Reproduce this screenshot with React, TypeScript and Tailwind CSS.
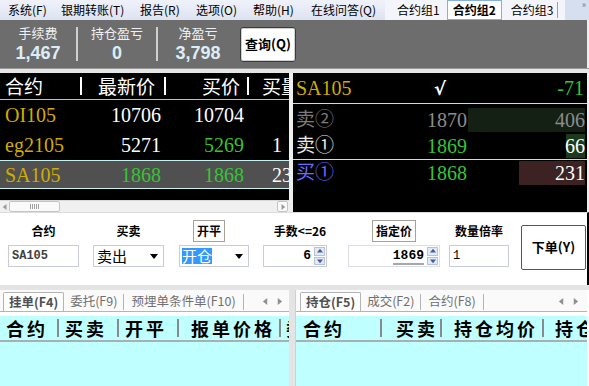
const quoteFont = "font-['Liberation_Serif','Noto_Sans_CJK_SC',serif]";
const monoFont = "font-['Liberation_Mono','Noto_Sans_CJK_SC',monospace]";

function Tri({ dir, color = "#000", size = 7 }: { dir: "up" | "down" | "left" | "right"; color?: string; size?: number }) {
  const pts: Record<string, string> = {
    up: "0,6 4,1 8,6",
    down: "0,2 8,2 4,7",
    left: "6,0 6,8 1,4",
    right: "2,0 2,8 7,4",
  };
  return (
    <svg width={size} height={size} viewBox="0 0 8 8">
      <polygon points={pts[dir]} fill={color} />
    </svg>
  );
}

function Spinner() {
  return (
    <div className="w-[12px] h-full flex flex-col gap-[1px] py-[1px] pr-[1px]">
      <div className="flex-1 flex items-center justify-center bg-[#e4eaf4] border border-[#b8c2d2]">
        <Tri dir="up" color="#3d5fa8" size={6} />
      </div>
      <div className="flex-1 flex items-center justify-center bg-[#e4eaf4] border border-[#b8c2d2]">
        <Tri dir="down" color="#3d5fa8" size={6} />
      </div>
    </div>
  );
}

function Sep({ h = "h-[18px]", c = "bg-white" }: { h?: string; c?: string }) {
  return <div className={`w-[2px] shrink-0 ${h} ${c}`} />;
}

export default function App() {
  const menus = [
    ["系统(F)", "w-[53px]"],
    ["银期转账(T)", "w-[79px]"],
    ["报告(R)", "w-[56px]"],
    ["选项(O)", "w-[57px]"],
    ["帮助(H)", "w-[58px]"],
    ["在线问答(Q)", "w-[74px]"],
  ];

  const stats = [
    ["手续费", "1,467", "w-[76px]"],
    ["持仓盈亏", "0", "w-[78px]"],
    ["净盈亏", "3,798", "w-[80px]"],
  ];

  return (
    <div className="w-[589px] h-[386px] overflow-hidden flex flex-col bg-[#e4e4e4] font-['Noto_Sans_CJK_SC',sans-serif]">
      {/* menu bar */}
      <div className="h-[20px] shrink-0 flex items-center bg-gradient-to-b from-[#f0f2fa] to-[#dde3f1] text-[12px] text-black pl-[8px]">
        {menus.map(([t, w]) => (
          <span key={t} className={`${w} shrink-0 whitespace-nowrap`}>{t}</span>
        ))}
        <div className="flex items-center h-full bg-[#f3f5fa] pl-[12px] w-[180px]">
          <span className="whitespace-nowrap">合约组1</span>
          <span className="ml-[7px] h-full px-[5px] flex items-center bg-white border border-[#86aee6] font-bold whitespace-nowrap">合约组2</span>
          <span className="ml-[9px] whitespace-nowrap">合约组3</span>
          <div className="ml-[4px] w-px h-[16px] bg-[#a0a0a0]" />
        </div>
        <div className="flex-1 h-full bg-[#d6dff0] flex justify-end items-start pr-[3px] text-[9px] leading-[10px] text-[#6070a0]">»</div>
      </div>

      {/* stats */}
      <div className="h-[48px] shrink-0 flex items-center bg-[#6d6d6d]">
        {stats.map(([label, value, w], i) => (
          <div key={label} className="flex items-center">
            {i > 0 && <div className="w-[2px] h-[34px] bg-[#d0d0d0]" />}
            <div className={`${w} flex flex-col items-center leading-none`}>
              <span className="text-[13px] text-[#f0f0f0]">{label}</span>
              <span className="mt-[5px] text-[18px] font-bold text-[#dcedf8] font-['Liberation_Sans',sans-serif]">{value}</span>
            </div>
          </div>
        ))}
        <button className="ml-[2px] w-[56px] h-[35px] bg-white border border-[#3a3a3a] rounded-[3px] shadow-[inset_0_0_0_1px_#d0d0d0] text-[13px] font-bold text-black">
          查询(Q)
        </button>
        <div className="flex-1 self-stretch border-r-2 border-[#f0f0f0]" />
      </div>

      <div className="h-[5px] shrink-0 bg-[#e6e6e6] border-t border-[#9a9a9a]" />

      {/* quote area */}
      <div className="h-[139px] shrink-0 flex">
        <div className={`w-[289px] flex flex-col bg-black overflow-hidden ${quoteFont}`}>
          <div className="h-[27px] flex items-center border-b border-[#c0c0c0] text-white text-[19px] font-['Noto_Sans_CJK_SC',sans-serif] whitespace-nowrap overflow-hidden">
            <div className="w-[80px] shrink-0 pl-[5px]">合约</div>
            <Sep />
            <div className="w-[82px] shrink-0 text-right pr-[9px]">最新价</div>
            <Sep />
            <div className="w-[81px] shrink-0 text-right pr-[7px]">买价</div>
            <Sep />
            <div className="flex-1 pl-[13px] overflow-hidden">买量</div>
          </div>
          {[
            ["OI105", "10706", "10704", "", "text-white", "text-white", ""],
            ["eg2105", "5271", "5269", "1", "text-white", "text-[#35c435]", ""],
            ["SA105", "1868", "1868", "23", "text-[#35c435]", "text-[#35c435]", "sel"],
          ].map(([c, last, bid, vol, lc, bc, sel]) => (
            <div
              key={c}
              className={`flex items-center text-[20px] whitespace-nowrap overflow-hidden ${sel ? "h-[29px] bg-[#505050] border-y border-[#c8f4f4]" : "h-[30px]"}`}
            >
              <div className="w-[82px] shrink-0 pl-[5px] text-[#d0ac00]">{c}</div>
              <div className={`w-[84px] shrink-0 text-right pr-[5px] ${lc}`}>{last}</div>
              <div className={`w-[83px] shrink-0 text-right pr-[5px] ${bc}`}>{bid}</div>
              <div className="flex-1 pl-[23px] overflow-hidden text-white">{vol}</div>
            </div>
          ))}
          <div className="flex-1" />
          <div className="h-[12px] flex items-center bg-[#f0f0f0] border-t border-[#d8d8d8]">
            <div className="w-[9px] h-full flex items-center justify-center">
              <Tri dir="left" color="#9a9a9a" size={6} />
            </div>
            <div className="w-[51px] h-[11px] bg-[#fafafa] border border-[#c4c4c4] rounded-[2px] flex items-center justify-center gap-[1px]">
              {[0, 1, 2, 3, 4].map((k) => (
                <div key={k} className="w-px h-[5px] bg-[#a0a0a0]" />
              ))}
            </div>
            <div className="flex-1" />
            <div className="w-[11px] h-[11px] mr-[1px] border border-[#c4c4c4] rounded-[2px] bg-[#fafafa] flex items-center justify-center">
              <Tri dir="right" color="#9a9a9a" size={6} />
            </div>
          </div>
        </div>
        <div className="w-[4px] bg-[#eeeeee]" />
        <div className={`w-[294px] bg-black flex flex-col text-[20px] whitespace-nowrap ${quoteFont}`}>
          <div className="h-[31px] shrink-0 flex items-center border-b border-[#d8d8d8] px-[3px]">
            <div className="flex-1 text-[#d0ac00]">SA105</div>
            <div className="text-white text-[18px] font-bold font-['DejaVu_Sans',sans-serif]">√</div>
            <div className="flex-1 text-right text-[#35c435]">-71</div>
          </div>
          <div className="h-[24px] mt-[4px] flex items-center">
            <div className="w-[100px] pl-[3px] text-[#7c7c7c] text-[19px]">卖②</div>
            <div className="w-[74px] text-right text-[#8c8c8c]">1870</div>
            <div className="flex-1 h-full flex justify-end pr-[2px]">
              <div className="w-[117px] h-full bg-[#132013] flex justify-end items-center text-[#8c8c8c]">406</div>
            </div>
          </div>
          <div className="h-[24px] mt-[2px] flex items-center">
            <div className="w-[100px] pl-[3px] text-[#e8e8e8] text-[19px]">卖①</div>
            <div className="w-[74px] text-right text-[#35c435]">1869</div>
            <div className="flex-1 h-full flex justify-end pr-[2px]">
              <div className="w-[19px] h-full bg-[#1c3a1c] flex justify-end items-center text-white">66</div>
            </div>
          </div>
          <div className="h-px mt-[1px] bg-[#d8d8d8]" />
          <div className="h-[24px] mt-[1px] flex items-center">
            <div className="w-[100px] pl-[3px] text-[#6a6aff] text-[19px]">买①</div>
            <div className="w-[74px] text-right text-[#35c435]">1868</div>
            <div className="flex-1 h-full flex justify-end pr-[2px]">
              <div className="w-[66px] h-full bg-[#3c2222] flex justify-end items-center text-white">231</div>
            </div>
          </div>
        </div>
        <div className="flex-1 bg-[#eeeeee]" />
      </div>

      {/* order entry */}
      <div className="h-[73px] shrink-0 flex bg-white pl-[8px] border-r-2 border-black border-t border-t-[#dcdcdc] text-[12px] font-bold text-black">
        <div className="w-[71px] flex flex-col items-center pt-[7px]">
          <div className="h-[22px] flex items-center">合约</div>
          <div className={`mt-[3px] w-full h-[22px] border border-[#c8ccd6] flex items-center pl-[3px] text-[12px] text-[#404040] ${monoFont}`}>SA105</div>
        </div>
        <div className="ml-[14px] w-[71px] flex flex-col items-center pt-[7px]">
          <div className="h-[22px] flex items-center">买卖</div>
          <div className="mt-[3px] w-full h-[22px] border border-[#c8ccd6] flex items-center pl-[3px] pr-[5px] font-normal text-[15px]">
            <span className="flex-1">卖出</span>
            <Tri dir="down" size={8} />
          </div>
        </div>
        <div className="ml-[15px] w-[70px] flex flex-col items-center pt-[7px]">
          <div className="h-[22px] flex items-center border border-[#a8a296] px-[3px] -ml-[10px]">开平</div>
          <div className="mt-[3px] w-full h-[22px] border border-[#c8ccd6] flex items-center pl-[2px] pr-[5px] font-normal text-[15px]">
            <span className="bg-[#3399ff] text-white leading-[16px]">开仓</span>
            <span className="flex-1" />
            <Tri dir="down" size={8} />
          </div>
        </div>
        <div className="ml-[14px] w-[64px] flex flex-col items-center pt-[7px]">
          <div className="h-[22px] flex items-center whitespace-nowrap ml-[10px]">手数&lt;=26</div>
          <div className="mt-[3px] w-full h-[22px] border border-[#c8ccd6] flex items-center">
            <span className={`flex-1 text-right pr-[3px] text-[13px] ${monoFont}`}>6</span>
            <Spinner />
          </div>
        </div>
        <div className="ml-[21px] w-[92px] flex flex-col items-center pt-[7px]">
          <div className="h-[22px] flex items-center border border-[#a8a296] px-[3px]">指定价</div>
          <div className="mt-[3px] w-full h-[22px] border border-[#dcdfe6] flex items-center">
            <span className={`flex-1 text-right pr-[3px] text-[13px] ${monoFont}`}>
              <span className="border-b-2 border-[#a8a8a8]">1869</span>
            </span>
            <Spinner />
          </div>
        </div>
        <div className="ml-[9px] w-[60px] flex flex-col items-center pt-[7px]">
          <div className="h-[22px] flex items-center whitespace-nowrap">数量倍率</div>
          <div className={`mt-[3px] w-full h-[22px] border border-[#c8ccd6] flex items-center pl-[3px] font-normal text-[12px] ${monoFont}`}>1</div>
        </div>
        <button className="ml-[12px] mt-[12px] w-[65px] h-[45px] bg-white border border-[#555] rounded-[2px] text-[13px] font-bold flex items-start justify-center pt-[11px]">
          下单(Y)
        </button>
      </div>

      <div className="h-[5px] shrink-0 bg-[#e4e4e4]" />

      {/* bottom panels */}
      <div className="flex-1 flex min-h-0">
        <div className="w-[289px] flex flex-col bg-[#fafafa] overflow-hidden">
          <div className="h-[22px] shrink-0 flex items-end text-[12.5px] text-[#707070] border-b border-[#b4b4b4] pl-[3px] pt-[2px] whitespace-nowrap">
            <div className="h-[19px] px-[5px] flex items-center bg-white border border-b-0 border-[#b4b4b4] font-bold text-[#505050] rounded-t-[2px]">挂单(F4)</div>
            <div className="h-[19px] px-[6px] flex items-center">委托(F9)</div>
            <div className="w-px h-[16px] bg-[#b4b4b4] mb-[1px]" />
            <div className="h-[19px] px-[7px] flex items-center">预埋单条件单(F10)</div>
            <div className="w-px h-[16px] bg-[#b4b4b4] mb-[1px]" />
            <div className="flex-1 h-[19px] flex items-center justify-end gap-[7px] pr-[6px]">
              <Tri dir="left" color="#909090" size={7} />
              <Tri dir="right" color="#909090" size={7} />
            </div>
          </div>
          <div className="h-[4px] shrink-0 bg-white" />
          <div className="flex-1 bg-[#c0ffff] flex flex-col">
            <div className="h-[26px] shrink-0 flex items-center border-b-2 border-[#a8b0b0] text-[18px] font-bold tracking-[3px] text-black whitespace-nowrap overflow-hidden">
              <div className="w-[57px] shrink-0 pl-[6px]">合约</div>
              <Sep c="bg-[#8a8a8a]" />
              <div className="w-[58px] shrink-0 pl-[6px]">买卖</div>
              <Sep c="bg-[#8a8a8a]" />
              <div className="w-[58px] shrink-0 pl-[6px]">开平</div>
              <Sep c="bg-[#8a8a8a]" />
              <div className="w-[100px] shrink-0 pl-[12px]">报单价格</div>
              <Sep c="bg-[#8a8a8a]" />
              <div className="flex-1 min-w-0 pl-[5px] overflow-hidden">委托</div>
            </div>
          </div>
        </div>
        <div className="w-[7px] bg-[#e4e4e4] border-r border-[#d0d0d0]" />
        <div className="w-[291px] flex flex-col bg-[#fafafa] overflow-hidden">
          <div className="h-[22px] shrink-0 flex items-end text-[12.5px] text-[#707070] border-b border-[#b4b4b4] pl-[4px] pt-[2px] whitespace-nowrap">
            <div className="h-[19px] px-[5px] flex items-center bg-white border border-b-0 border-[#b4b4b4] font-bold text-[#505050] rounded-t-[2px]">持仓(F5)</div>
            <div className="h-[19px] px-[6px] flex items-center">成交(F2)</div>
            <div className="w-px h-[16px] bg-[#b4b4b4] mb-[1px]" />
            <div className="h-[19px] px-[7px] flex items-center">合约(F8)</div>
            <div className="w-px h-[16px] bg-[#b4b4b4] mb-[1px]" />
            <div className="flex-1 h-[19px] flex items-center justify-end gap-[7px] pr-[8px]">
              <Tri dir="left" color="#909090" size={7} />
              <Tri dir="right" color="#909090" size={7} />
            </div>
          </div>
          <div className="h-[4px] shrink-0 bg-white" />
          <div className="flex-1 bg-[#c0ffff] flex flex-col">
            <div className="h-[26px] shrink-0 flex items-center border-b-2 border-[#a8b0b0] text-[18px] font-bold tracking-[3px] text-black whitespace-nowrap overflow-hidden">
              <div className="w-[84px] shrink-0 pl-[7px]">合约</div>
              <Sep c="bg-[#8a8a8a]" />
              <div className="w-[58px] shrink-0 pl-[14px]">买卖</div>
              <Sep c="bg-[#8a8a8a]" />
              <div className="w-[100px] shrink-0 pl-[12px]">持仓均价</div>
              <Sep c="bg-[#8a8a8a]" />
              <div className="flex-1 min-w-0 pl-[11px] overflow-hidden">持仓</div>
            </div>
          </div>
        </div>
        <div className="flex-1 bg-white" />
      </div>
    </div>
  );
}
